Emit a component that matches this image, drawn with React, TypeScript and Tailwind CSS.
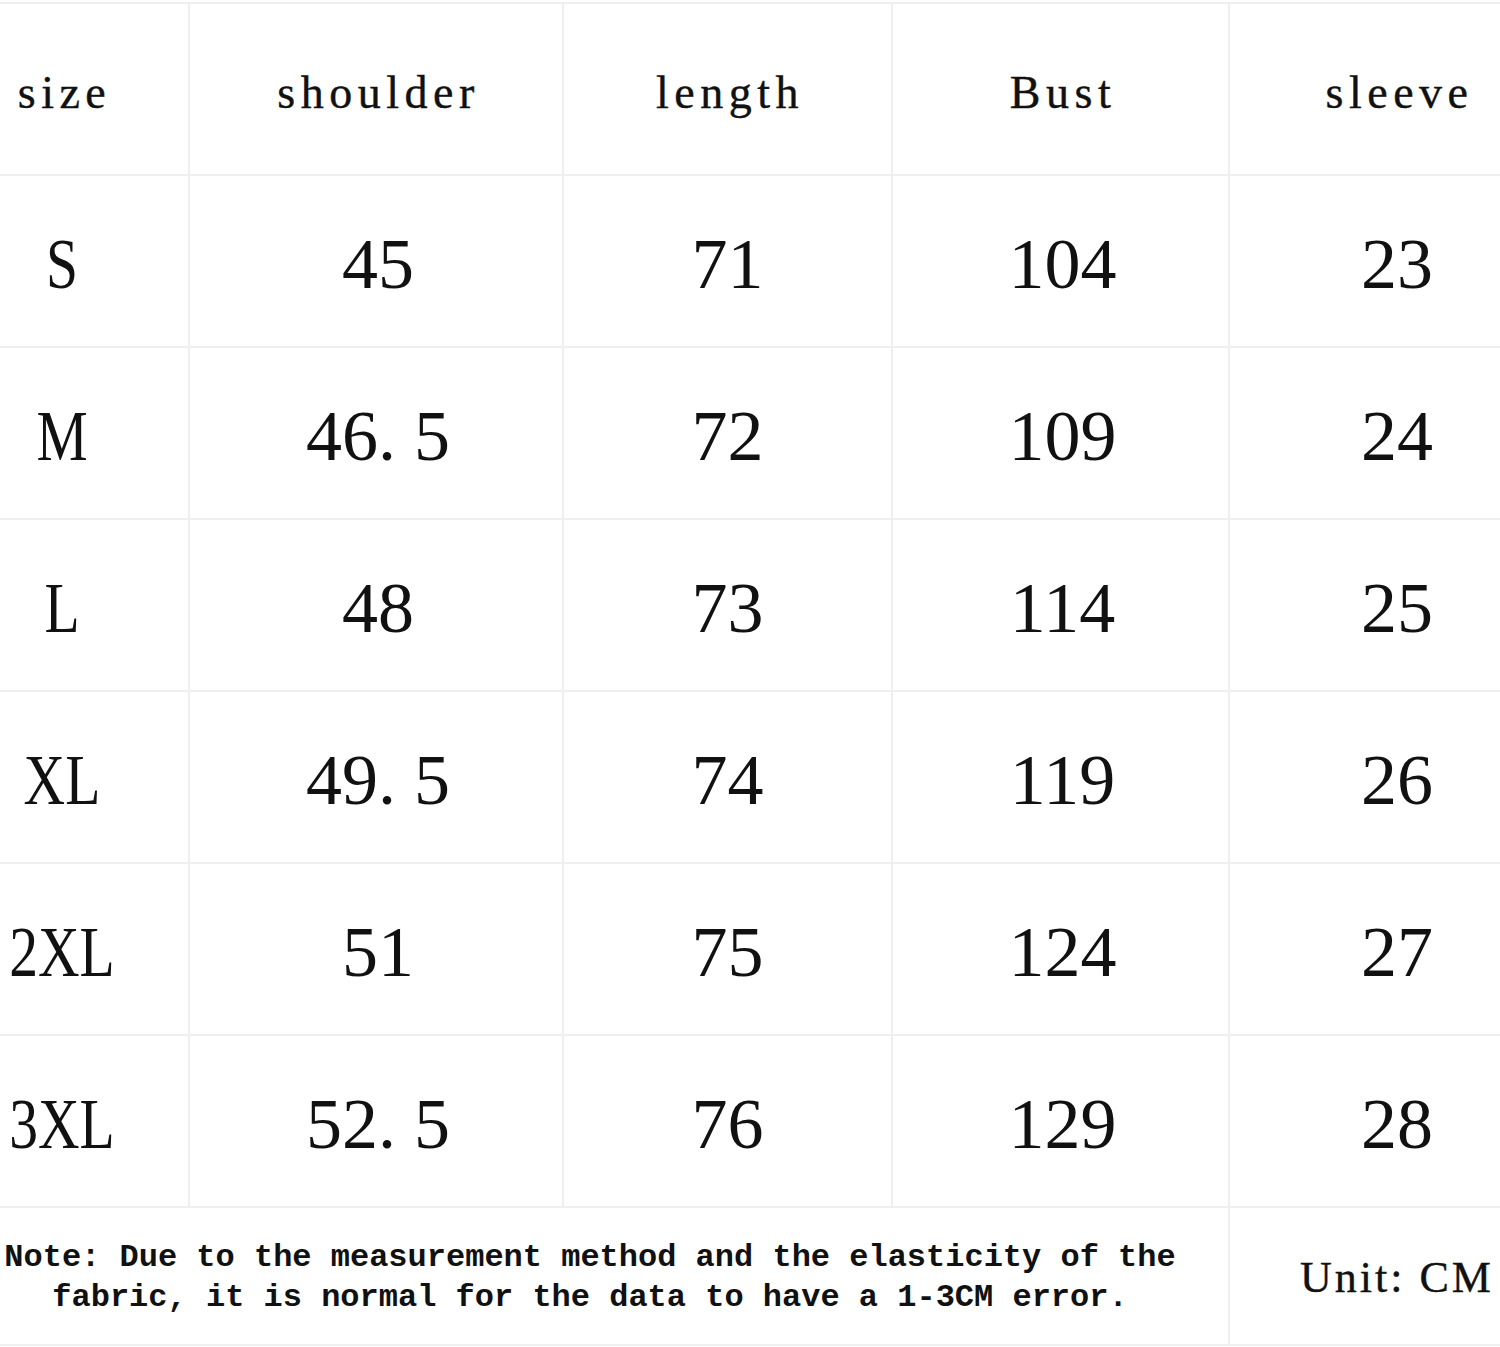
import React from 'react';

const rows = [
  { size: 'S', shoulder: '45', length: '71', bust: '104', sleeve: '23' },
  { size: 'M', shoulder: '46. 5', length: '72', bust: '109', sleeve: '24' },
  { size: 'L', shoulder: '48', length: '73', bust: '114', sleeve: '25' },
  { size: 'XL', shoulder: '49. 5', length: '74', bust: '119', sleeve: '26' },
  { size: '2XL', shoulder: '51', length: '75', bust: '124', sleeve: '27' },
  { size: '3XL', shoulder: '52. 5', length: '76', bust: '129', sleeve: '28' },
];

const headers = ['size', 'shoulder', 'length', 'Bust', 'sleeve'];

const cell = 'h-[172px] flex items-center justify-center border-b-2 border-[#efefef]';
const lined = 'border-r-2';

const App = () => {
  return (
    <div className="w-[1500px] h-[1347px] bg-white overflow-hidden pt-[2px] text-[#111]">
      <div className="-ml-[64px] w-[1628px] grid grid-cols-[254px_374px_329px_337px_334px] border-t-2 border-[#efefef]">
        {/* Header */}
        {headers.map((h, i) => (
          <div key={h} className={`${cell} ${i < 4 ? lined : ''}`}>
            <span className="font-['Liberation_Serif',serif] text-[46px] leading-none tracking-[5.5px] pl-[5px] pt-[8px] [-webkit-text-stroke:0.4px_#111]">
              {h}
            </span>
          </div>
        ))}

        {/* Data rows */}
        {rows.map((r) => (
          <React.Fragment key={r.size}>
            <div className={`${cell} ${lined}`}>
              <span className="inline-block font-['Liberation_Serif',serif] text-[72px] leading-none scale-x-[0.8] pt-[6px]">
                {r.size}
              </span>
            </div>
            <div className={`${cell} ${lined}`}>
              <span className="font-['Liberation_Serif',serif] text-[72px] leading-none whitespace-pre pt-[6px] pl-[4px]">{r.shoulder}</span>
            </div>
            <div className={`${cell} ${lined}`}>
              <span className="font-['Liberation_Serif',serif] text-[72px] leading-none pt-[6px]">{r.length}</span>
            </div>
            <div className={`${cell} ${lined}`}>
              <span className="font-['Liberation_Serif',serif] text-[72px] leading-none pt-[6px] pl-[4px]">{r.bust}</span>
            </div>
            <div className={cell}>
              <span className="font-['Liberation_Serif',serif] text-[72px] leading-none pt-[6px]">{r.sleeve}</span>
            </div>
          </React.Fragment>
        ))}

        {/* Footer */}
        <div className="col-span-4 h-[138px] flex items-center justify-center pl-[16px] border-r-2 border-b-2 border-[#efefef]">
          <p className="font-['Liberation_Mono',monospace] font-bold text-[32px] leading-[40px] text-center pt-[4px] whitespace-nowrap">
            Note: Due to the measurement method and the elasticity of the
            <br />
            fabric, it is normal for the data to have a 1-3CM error.
          </p>
        </div>
        <div className="h-[138px] flex items-center justify-center border-b-2 border-[#efefef]">
          <span className="font-['Liberation_Serif',serif] text-[44px] leading-none tracking-[3px] pt-[4px] whitespace-pre [-webkit-text-stroke:0.4px_#111]">
            Unit: CM
          </span>
        </div>
      </div>
    </div>
  );
};

export default App;
